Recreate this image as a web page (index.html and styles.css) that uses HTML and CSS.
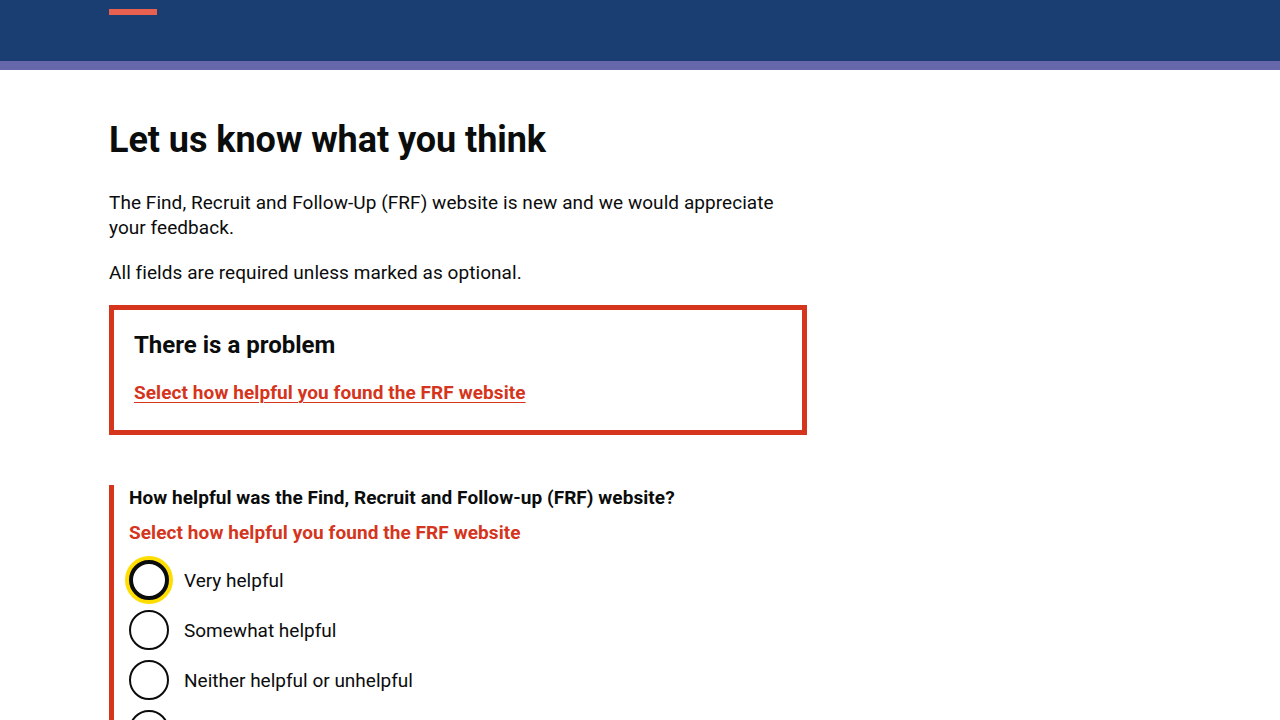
FILE: index.html
```html
<!DOCTYPE html>
<html lang="en">
<head>
<meta charset="utf-8">
<title>Let us know what you think</title>
<link rel="stylesheet" href="styles.css">
</head>
<body>
<header class="site-header">
  <div class="container header-inner">
    <span class="header-accent"></span>
  </div>
</header>
<div class="header-band"></div>
<main class="container main">
  <div class="two-thirds">
    <h1 class="title">Let us know what you think</h1>
    <p class="body">The Find, Recruit and Follow-Up (FRF) website is new and we would appreciate your feedback.</p>
    <p class="body">All fields are required unless marked as optional.</p>

    <div class="error-summary" role="alert">
      <h2 class="error-summary-title">There is a problem</h2>
      <ul class="error-list">
        <li><a href="#helpful" class="error-link">Select how helpful you found the FRF website</a></li>
      </ul>
    </div>

    <div class="form-group form-group-error">
      <fieldset class="fieldset">
        <legend class="legend">How helpful was the Find, Recruit and Follow-up (FRF) website?</legend>
        <p class="error-message">Select how helpful you found the FRF website</p>
        <div class="radios">
          <label class="radio"><span class="radio-circle focused"></span><span class="radio-label">Very helpful</span></label>
          <label class="radio"><span class="radio-circle"></span><span class="radio-label">Somewhat helpful</span></label>
          <label class="radio"><span class="radio-circle"></span><span class="radio-label">Neither helpful or unhelpful</span></label>
          <label class="radio"><span class="radio-circle"></span><span class="radio-label">Somewhat unhelpful</span></label>
        </div>
      </fieldset>
    </div>
  </div>
</main>
</body>
</html>
```
FILE: styles.css
```css
* { box-sizing: border-box; }
html, body { margin: 0; padding: 0; }
body {
  font-family: Roboto, "Liberation Sans", Arial, sans-serif;
  color: #0b0c0c;
  background: #fff;
}
.container {
  padding: 0 109px;
}
.site-header {
  background: #1a3e72;
  height: 61px;
}
.header-inner {
  padding-top: 9px;
}
.header-accent {
  display: block;
  width: 48px;
  height: 6px;
  background: #e8604f;
}
.header-band {
  height: 9px;
  background: #6767ab;
}
.main {
  padding-top: 48px;
}
.two-thirds {
  width: 698px;
}
.title {
  font-size: 36px;
  line-height: 44px;
  font-weight: 700;
  margin: 0 0 28px;
  letter-spacing: -0.05px;
}
.body {
  font-size: 19px;
  line-height: 25px;
  margin: 0 0 20px;
  letter-spacing: 0.06px;
}
.error-summary {
  border: 5px solid #d4351c;
  padding: 20px 20px 25px;
  margin-top: 0;
  margin-bottom: 50px;
}
.error-summary-title {
  font-size: 24px;
  line-height: 30px;
  font-weight: 700;
  margin: 0 0 20px;
}
.error-list {
  list-style: none;
  margin: 0;
  padding: 0;
}
.error-link {
  font-size: 19px;
  line-height: 25px;
  font-weight: 700;
  color: #d4351c;
  text-decoration: underline;
  text-underline-offset: 3px;
  text-decoration-thickness: 1px;
  letter-spacing: 0.08px;
}
.form-group-error {
  border-left: 5px solid #d4351c;
  padding-left: 15px;
}
.fieldset {
  border: 0;
  margin: 0;
  padding: 0;
}
.legend {
  font-size: 19px;
  line-height: 25px;
  font-weight: 700;
  padding: 0;
  margin-bottom: 10px;
  letter-spacing: 0.06px;
}
.error-message {
  font-size: 19px;
  line-height: 25px;
  font-weight: 700;
  color: #d4351c;
  margin: 0 0 15px;
  letter-spacing: 0.08px;
}
.radios {
  display: flex;
  flex-direction: column;
  gap: 10px;
}
.radio {
  display: flex;
  align-items: center;
  gap: 15px;
  font-size: 19px;
  line-height: 25px;
  min-height: 40px;
}
.radio-circle {
  width: 40px;
  height: 40px;
  border: 2px solid #0b0c0c;
  border-radius: 50%;
  flex: none;
  background: #fff;
}
.radio-circle.focused {
  border-width: 4px;
  box-shadow: 0 0 0 4px #ffdd00;
}
```
